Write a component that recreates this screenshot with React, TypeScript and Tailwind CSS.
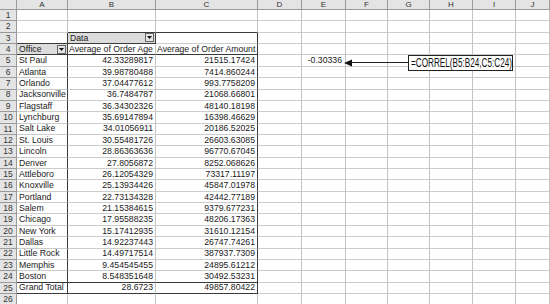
import React from 'react'

const COLS = ['A', 'B', 'C', 'D', 'E', 'F', 'G', 'H', 'I', 'J']

const DATA: [string, string, string][] = [
  ['St Paul', '42.33289817', '21515.17424'],
  ['Atlanta', '39.98780488', '7414.860244'],
  ['Orlando', '37.04477612', '993.7758209'],
  ['Jacksonville', '36.7484787', '21068.66801'],
  ['Flagstaff', '36.34302326', '48140.18198'],
  ['Lynchburg', '35.69147894', '16398.46629'],
  ['Salt Lake', '34.01056911', '20186.52025'],
  ['St. Louis', '30.55481726', '26603.63085'],
  ['Lincoln', '28.86363636', '96770.67045'],
  ['Denver', '27.8056872', '8252.068626'],
  ['Attleboro', '26.12054329', '73317.11197'],
  ['Knoxville', '25.13934426', '45847.01978'],
  ['Portland', '22.73134328', '42442.77189'],
  ['Salem', '21.15384615', '9379.677231'],
  ['Chicago', '17.95588235', '48206.17363'],
  ['New York', '15.17412935', '31610.12154'],
  ['Dallas', '14.92237443', '26747.74261'],
  ['Little Rock', '14.49717514', '387937.7309'],
  ['Memphis', '9.454545455', '24895.61212'],
  ['Boston', '8.548351648', '30492.53231'],
  ['Grand Total', '28.6723', '49857.80422'],
]

function DropButton() {
  return (
    <span className="ml-auto mr-[1px] flex h-[9px] w-[9px] shrink-0 items-center justify-center border border-[#666] bg-[#e4e4e4]">
      <svg width="5" height="3" viewBox="0 0 5 3">
        <path d="M0 0h5L2.5 3z" fill="#111" />
      </svg>
    </span>
  )
}

// which pivot-table edges are drawn dark
function rightDark(c: number, r: number) {
  if ((c === 0 || c === 2) && r >= 3 && r <= 25) return true
  if (c === 1 && r === 3) return true
  return false
}

function bottomDark(c: number, r: number) {
  if ((c === 1 || c === 2) && r === 2) return true
  if (c === 0 && r === 3) return true
  if (c === 1 && r === 3) return true
  if (c <= 2 && (r === 4 || r === 24 || r === 25)) return true
  return false
}

function cellContent(c: number, r: number) {
  if (r === 3 && c === 1)
    return (
      <>
        <span className="pl-[2px]">Data</span>
        <DropButton />
      </>
    )
  if (r === 4 && c === 0)
    return (
      <>
        <span className="pl-[2px]">Office</span>
        <DropButton />
      </>
    )
  if (r === 4 && c === 1) return <span className="pl-[1px]">Average of Order Age</span>
  if (r === 4 && c === 2) return <span className="pl-[1px]">Average of Order Amount</span>
  if (r >= 5 && r <= 25 && c <= 2) {
    const row = DATA[r - 5]
    if (c === 0) return <span className="pl-[2px]">{row[0]}</span>
    return <span className="ml-auto pr-[2px]">{row[c]}</span>
  }
  if (r === 5 && c === 4) return <span className="ml-auto pr-[3px]">-0.30336</span>
  return null
}

export default function App() {
  const rows = Array.from({ length: 26 }, (_, i) => i + 1)

  return (
    <div
      className="relative h-[304px] w-[550px] overflow-hidden bg-white text-[8.7px] leading-none text-[#1a1a1a]"
      style={{ fontFamily: '"Liberation Sans", Arial, sans-serif' }}
    >
      <div className="grid w-[550px] grid-cols-[17px_51px_88px_102px_44px_44px_42px_42px_43px_43px_1fr]">
        {/* column headers */}
        <div className="h-[10px] border-b border-r border-[#9a9a9a] bg-[#e4e4e4]" />
        {COLS.map((l) => (
          <div
            key={l}
            className="flex h-[10px] items-center justify-center border-b border-r border-[#9a9a9a] bg-[#e4e4e4] text-[8px] text-[#333]"
          >
            {l}
          </div>
        ))}

        {rows.map((r) => (
          <React.Fragment key={r}>
            <div className="flex h-[11.37px] items-center justify-center border-b border-r border-[#9a9a9a] bg-[#e4e4e4] text-[8.5px] text-[#333]">
              {r}
            </div>
            {COLS.map((_, c) => {
              const button = (r === 3 && c === 1) || (r === 4 && c === 0)
              return (
                <div
                  key={c}
                  className={
                    'flex h-[11.37px] items-center overflow-visible whitespace-nowrap border-b border-r ' +
                    (rightDark(c, r) ? 'border-r-[#3a3a3a] ' : 'border-r-[#c4c4c4] ') +
                    (bottomDark(c, r) ? 'border-b-[#3a3a3a] ' : 'border-b-[#cccccc] ') +
                    (button ? 'bg-[#dcdcdc]' : 'bg-white')
                  }
                >
                  {cellContent(c, r)}
                </div>
              )
            })}
          </React.Fragment>
        ))}
      </div>

      {/* arrow from formula callout to E5 */}
      <div className="absolute left-[344px] top-[58px] z-10 flex h-[9px] w-[65px] items-center">
        <svg className="block shrink-0" width="8" height="8" viewBox="0 0 8 8">
          <path d="M0 4L8 0.5v7z" fill="#111" />
        </svg>
        <div className="h-[1px] flex-1 bg-[#222]" />
      </div>

      {/* formula callout */}
      <div className="absolute left-[408px] top-[55px] z-10 flex h-[16px] w-[105px] items-center overflow-hidden border border-[#222] bg-white">
        <span className="inline-block origin-left scale-x-[0.68] whitespace-nowrap pl-[3px] text-[12px] leading-none text-[#111]">
          =CORREL(B5:B24,C5:C24)
        </span>
      </div>
    </div>
  )
}
